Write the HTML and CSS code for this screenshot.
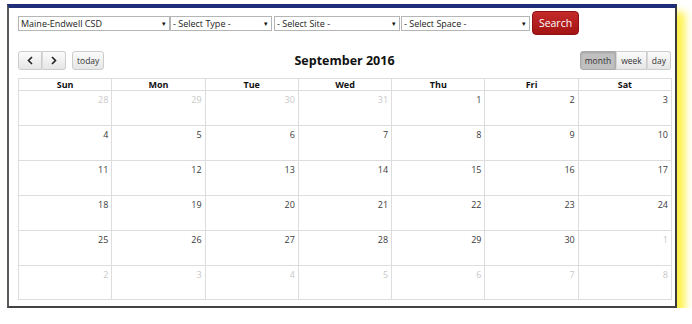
FILE: index.html
```html
<!DOCTYPE html>
<html>
    <head>
        <meta charset="utf-8">
        <title>Space Calendar</title>
        <link rel="stylesheet" href="styles.css">
    </head>
    <body>
        <div class="frame">
            <div class="filters">
                <div class="pick pick-district">Maine-Endwell CSD<span class="arrow">&#9662;</span></div>
                <div class="pick pick-type">- Select Type -<span class="arrow">&#9662;</span></div>
                <div class="pick pick-site">- Select Site -<span class="arrow">&#9662;</span></div>
                <div class="pick pick-space">- Select Space -<span class="arrow">&#9662;</span></div>
                <button class="search">Search</button>
            </div>

            <div class="toolbar">
                <div class="left">
                    <div class="group">
                        <span class="btn nav"><svg width="8" height="9" viewBox="0 0 8 9"><path d="M6 1 L2.5 4.5 L6 8" fill="none" stroke="#222" stroke-width="1.6"/></svg></span><span class="btn nav"><svg width="8" height="9" viewBox="0 0 8 9"><path d="M2 1 L5.5 4.5 L2 8" fill="none" stroke="#222" stroke-width="1.6"/></svg></span>
                    </div>
                    <span class="btn single">today</span>
                </div>
                <h2 class="title">September 2016</h2>
                <div class="right">
                    <div class="group">
                        <span class="btn active">month</span><span class="btn">week</span><span class="btn">day</span>
                    </div>
                </div>
            </div>

            <div class="calendar">
                <div class="head">Sun</div><div class="head">Mon</div><div class="head">Tue</div><div class="head">Wed</div><div class="head">Thu</div><div class="head">Fri</div><div class="head">Sat</div>

                <div class="day other">28</div><div class="day other">29</div><div class="day other">30</div><div class="day other">31</div><div class="day">1</div><div class="day">2</div><div class="day">3</div>
                <div class="day">4</div><div class="day">5</div><div class="day">6</div><div class="day">7</div><div class="day">8</div><div class="day">9</div><div class="day">10</div>
                <div class="day">11</div><div class="day">12</div><div class="day">13</div><div class="day">14</div><div class="day">15</div><div class="day">16</div><div class="day">17</div>
                <div class="day">18</div><div class="day">19</div><div class="day">20</div><div class="day">21</div><div class="day">22</div><div class="day">23</div><div class="day">24</div>
                <div class="day">25</div><div class="day">26</div><div class="day">27</div><div class="day">28</div><div class="day">29</div><div class="day">30</div><div class="day other">1</div>
                <div class="day other">2</div><div class="day other">3</div><div class="day other">4</div><div class="day other">5</div><div class="day other">6</div><div class="day other">7</div><div class="day other">8</div>
            </div>
        </div>
    </body>
</html>
```

FILE: styles.css
```css
body {
    margin: 0;
    background: #ffffff;
    font-family: "Open Sans", "Noto Sans", sans-serif;
    color: #333333;
}
.frame {
    margin: 4px 0 0 7px;
    width: 653px;
    height: 295px;
    background: #ffffff;
    border-top: 4px solid #1e2e78;
    border-left: 2px solid #5a5a5a;
    border-right: 2px solid #3a3a3a;
    border-bottom: 2px solid #444444;
    box-shadow: 8px 8px 8px #fff24a;
    padding: 3px 4px 0 9px;
    box-sizing: content-box;
}

/* filter row */
.filters {
    display: flex;
    align-items: center;
    height: 24px;
}
.pick {
    height: 13px;
    border: 1px solid #b5b5b5;
    font-size: 9px;
    line-height: 13px;
    padding: 0 3px 0 2px;
    color: #222222;
    display: flex;
    justify-content: space-between;
    box-sizing: content-box;
}
.pick .arrow {
    font-size: 7px;
    color: #111111;
}
.pick-district { width: 145px; }
.pick-type { width: 95px; }
.pick-site { width: 119px; margin-left: 2px; }
.pick-space { width: 122px; margin-left: 1px; }
.search {
    margin-left: 2px;
    width: 47px;
    height: 24px;
    border: 1px solid #8e1010;
    border-radius: 4px;
    background: linear-gradient(#c42a2a, #a31414);
    color: #ffffff;
    font-family: "Open Sans", "Noto Sans", sans-serif;
    font-size: 10.5px;
    padding: 0;
}

/* toolbar */
.toolbar {
    display: grid;
    grid-template-columns: 1fr auto 1fr;
    align-items: center;
    margin-top: 16px;
    height: 18px;
}
.left {
    display: flex;
    gap: 6px;
}
.right {
    display: flex;
    justify-content: flex-end;
}
.title {
    margin: 0;
    font-size: 12.5px;
    font-weight: 700;
    color: #111111;
    line-height: 18px;
}
.group {
    display: flex;
}
.btn {
    display: inline-block;
    height: 17px;
    line-height: 17px;
    padding: 0 4px;
    font-size: 8.5px;
    color: #333333;
    border: 1px solid #cccccc;
    background: linear-gradient(#fbfbfb, #e6e6e6);
}
.group .btn + .btn {
    border-left: 1px solid #d8d8d8;
}
.group .btn:first-child { border-radius: 3px 0 0 3px; }
.group .btn:last-child { border-radius: 0 3px 3px 0; }
.btn.single { border-radius: 3px; padding: 0 4px; }
.btn.nav {
    width: 12px;
    padding: 0 5px;
    display: flex;
    align-items: center;
    justify-content: center;
}
.btn.active {
    background: #c0c0c0;
    border-color: #aaaaaa;
    box-shadow: inset 0 1px 2px rgba(0,0,0,0.15);
}

/* calendar */
.calendar {
    margin-top: 9px;
    display: grid;
    grid-template-columns: repeat(7, 1fr);
    grid-template-rows: 12px repeat(5, 35px) 34px;
    width: 654px;
    border-top: 1px solid #dddddd;
    border-left: 1px solid #dddddd;
    box-sizing: border-box;
}
.head, .day {
    border-right: 1px solid #dddddd;
    border-bottom: 1px solid #dddddd;
}
.head {
    font-size: 9px;
    font-weight: 700;
    text-align: center;
    line-height: 11px;
    color: #111111;
}
.day {
    font-size: 9px;
    text-align: right;
    padding: 2px 3px 0 0;
    color: #3a3a3a;
}
.day.other {
    color: #c8c8c8;
}
```
